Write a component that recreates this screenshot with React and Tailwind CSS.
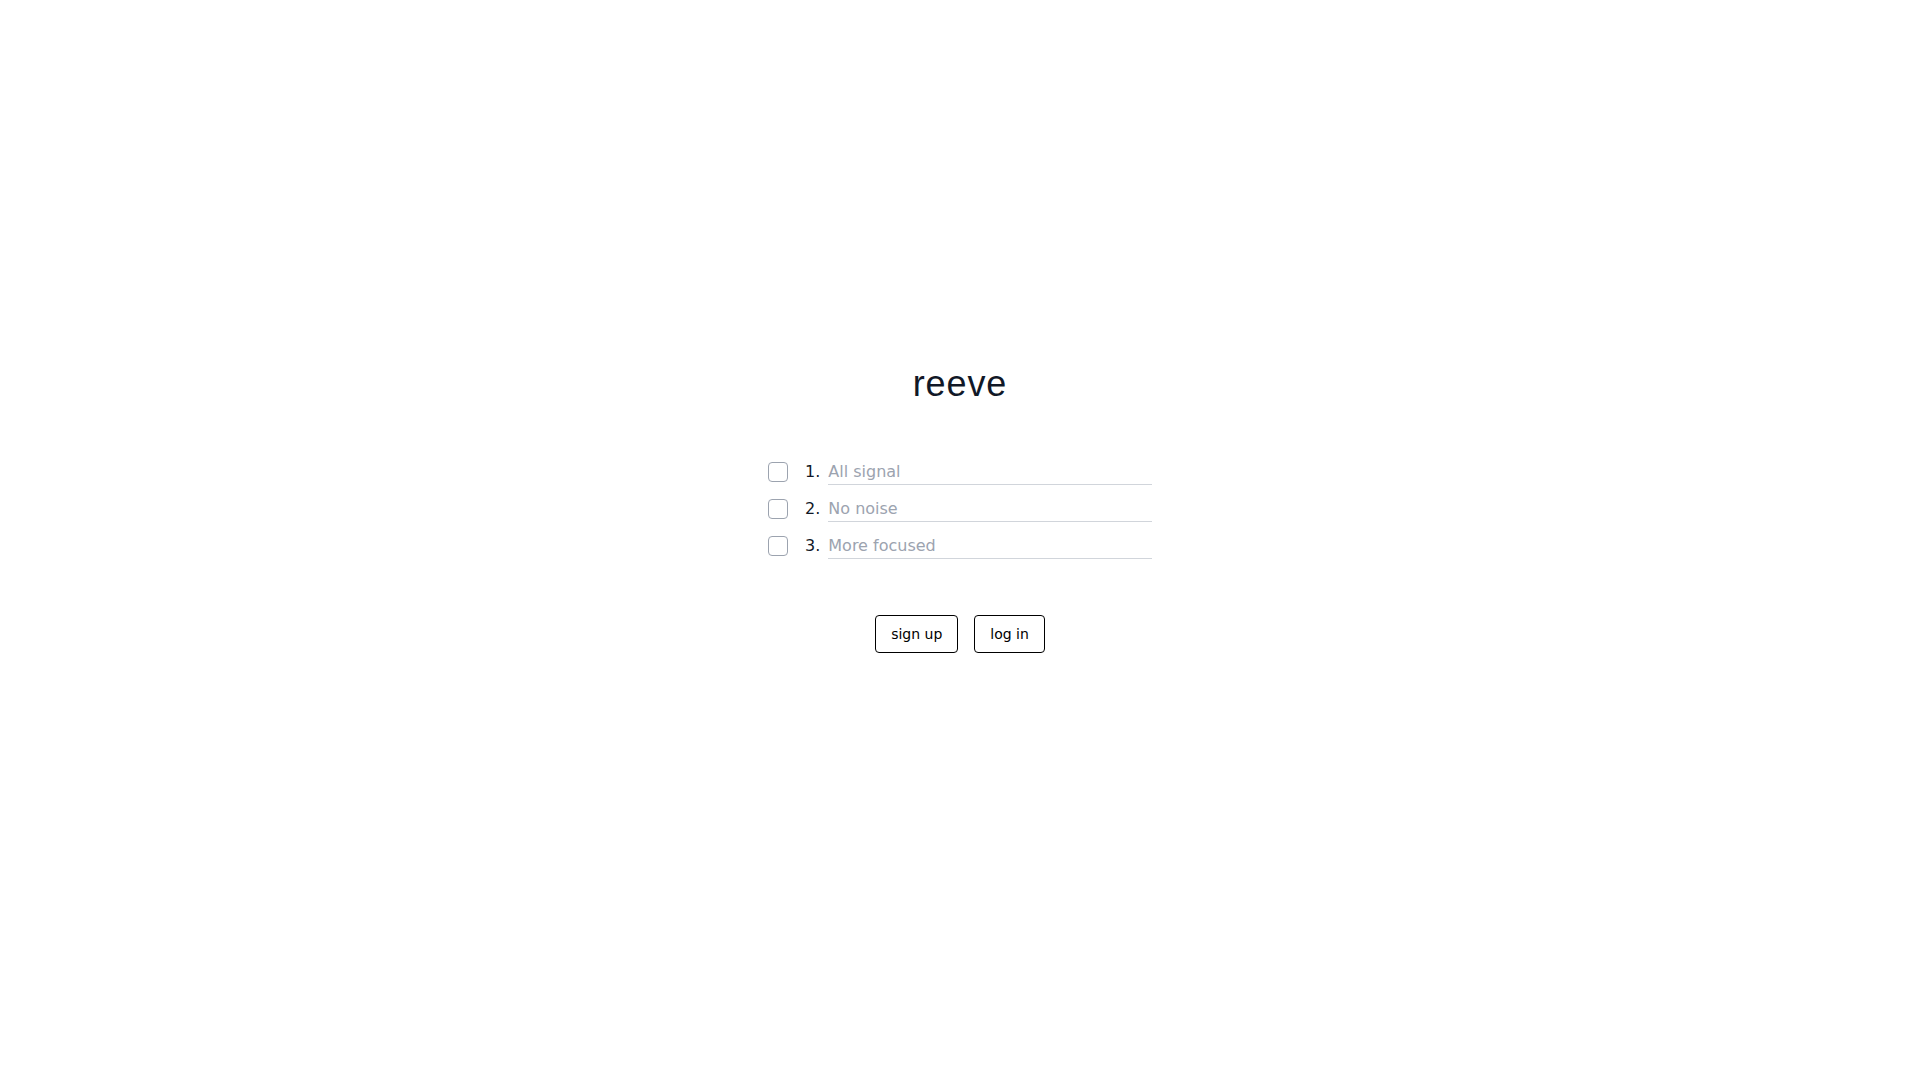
const items = ["All signal", "No noise", "More focused"];

export default function App() {
  return (
    <main className="flex min-h-screen flex-col items-center justify-center bg-white pb-16 font-['DejaVu_Sans',sans-serif] text-[#111827]">
      <h1 className="mb-14 font-['Liberation_Sans',sans-serif] text-4xl tracking-wide">reeve</h1>
      <ul className="mb-14 flex w-96 max-w-full flex-col gap-3">
        {items.map((item, i) => (
          <li key={item} className="flex items-center">
            <input
              type="checkbox"
              id={`task-${i}`}
              aria-label={`Complete task ${i + 1}`}
              className="mr-[17px] h-5 w-5 shrink-0 appearance-none rounded border border-[#9ca3af] bg-white checked:bg-[#111827]"
            />
            <label htmlFor={`text-${i}`} className="mr-2 text-base">{i + 1}.</label>
            <input
              type="text"
              id={`text-${i}`}
              placeholder={item}
              className="min-w-0 flex-1 border-b border-[#d1d5db] text-base outline-none placeholder:text-[#9ca3af]"
            />
          </li>
        ))}
      </ul>
      <div className="flex gap-4 text-sm text-black">
        <button className="rounded border border-black px-[15px] py-2">sign up</button>
        <button className="rounded border border-black px-[15px] py-2">log in</button>
      </div>
    </main>
  );
}
